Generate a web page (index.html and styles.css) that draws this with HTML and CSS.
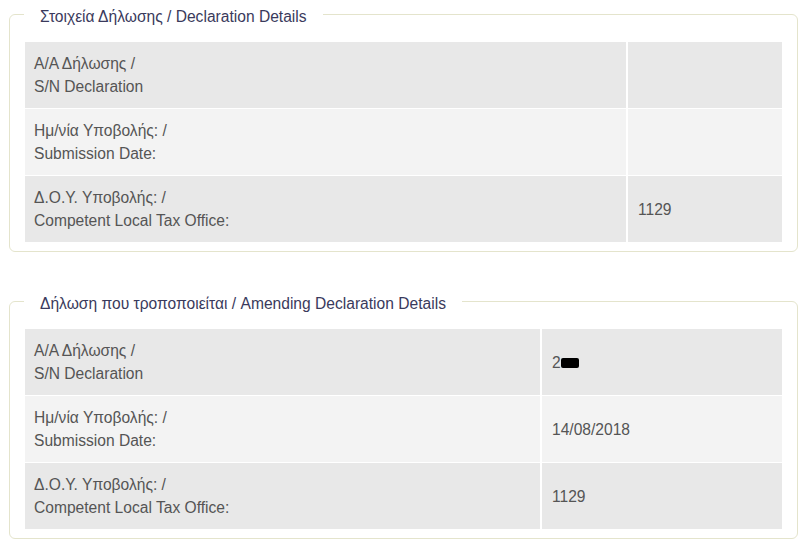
FILE: index.html
```html
<!DOCTYPE html>
<html lang="en">
	<head>
		<title>Declaration Details</title>
		<meta charset="utf-8" />
		<link rel="stylesheet" href="styles.css">
	</head>
	<body>
		<fieldset class="box">
			<legend>Στοιχεία Δήλωσης / Declaration Details</legend>
			<table class="details first">
				<tr class="odd">
					<td class="label">Α/Α Δήλωσης /<br>S/N Declaration</td>
					<td class="value"></td>
				</tr>
				<tr class="even">
					<td class="label">Ημ/νία Υποβολής: /<br>Submission Date:</td>
					<td class="value"></td>
				</tr>
				<tr class="odd">
					<td class="label">Δ.Ο.Υ. Υποβολής: /<br>Competent Local Tax Office:</td>
					<td class="value">1129</td>
				</tr>
			</table>
		</fieldset>

		<fieldset class="box">
			<legend>Δήλωση που τροποποιείται / Amending Declaration Details</legend>
			<table class="details second">
				<tr class="odd">
					<td class="label">Α/Α Δήλωσης /<br>S/N Declaration</td>
					<td class="value">2<span class="redacted"></span></td>
				</tr>
				<tr class="even">
					<td class="label">Ημ/νία Υποβολής: /<br>Submission Date:</td>
					<td class="value">14/08/2018</td>
				</tr>
				<tr class="odd">
					<td class="label">Δ.Ο.Υ. Υποβολής: /<br>Competent Local Tax Office:</td>
					<td class="value">1129</td>
				</tr>
			</table>
		</fieldset>
	</body>
</html>
```

FILE: styles.css
```css
body {
	margin: 0;
	padding: 2px 10px 0 9px;
	font-family: "Liberation Sans", Arial, sans-serif;
	font-size: 15.6px;
	color: #555;
	background: #fff;
}

.box {
	margin: 0 0 37px 0;
	padding: 16px 15px 9px 15px;
	border: 1px solid #e4e4cc;
	border-radius: 6px;
}

.box legend {
	margin-left: -1px;
	padding: 6px 16px 0 16px;
	color: #3a3a5c;
	font-size: 15.6px;
	line-height: 18px;
}

.details {
	width: 100%;
	border-collapse: collapse;
	table-layout: fixed;
}

.details td {
	box-sizing: border-box;
	padding: 10px 9px;
	line-height: 23px;
	vertical-align: middle;
	border: 1px solid #fff;
	border-left: 0;
	border-right: 0;
}

.details td.value {
	border-left: 2px solid #fff;
	padding-left: 10px;
}

.details tr:first-child td {
	border-top: 0;
}

.details tr:last-child td {
	border-bottom: 0;
}

.details .odd td {
	background: #e8e8e8;
}

.details .even td {
	background: #f3f3f3;
}

.first .value {
	width: 155px;
}

.second .value {
	width: 241px;
}

.redacted {
	display: inline-block;
	width: 18px;
	height: 10px;
	background: #000;
	border-radius: 2px;
	vertical-align: 0;
}
```
